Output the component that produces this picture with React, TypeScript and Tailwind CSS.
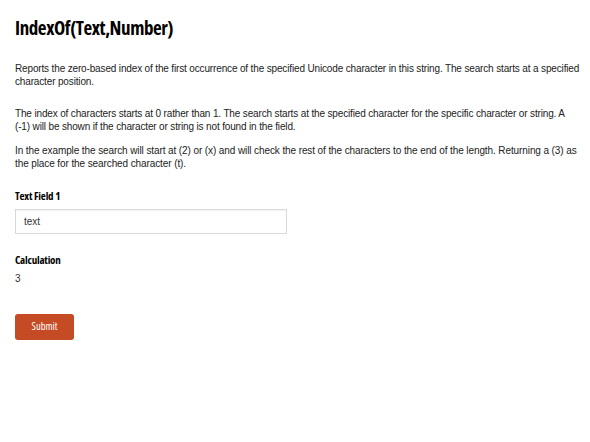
import { useState } from 'react'

const condensed = { fontFamily: '"Open Sans", "Liberation Sans", sans-serif', fontStretch: '75%' }

export default function App() {
  const [value, setValue] = useState('text')
  const [result] = useState('3')

  return (
    <div className="min-h-[442px] bg-white pl-[15px] pr-[8px] pt-[14px] text-[#222]" style={{ fontFamily: '"Liberation Sans", Arial, sans-serif' }}>
      <h1 className="text-[19px] font-bold leading-[28px] tracking-[-0.4px] text-black" style={condensed}>
        IndexOf(Text,Number)
      </h1>

      <p className="mt-[20px] text-[10px] leading-[13px] tracking-[-0.15px]">
        Reports the zero-based index of the first occurrence of the specified Unicode character in this string. The search starts at a specified
        <br />
        character position.
      </p>

      <p className="mt-[19px] text-[10px] leading-[13px] tracking-[-0.15px]">
        The index of characters starts at 0 rather than 1. The search starts at the specified character for the specific character or string. A
        <br />
        (-1) will be shown if the character or string is not found in the field.
      </p>

      <p className="mt-[11px] text-[10px] leading-[13px] tracking-[-0.1px]">
        In the example the search will start at (2) or (x) and will check the rest of the characters to the end of the length. Returning a (3) as
        <br />
        the place for the searched character (t).
      </p>

      {/* Form */}
      <div className="mt-[18px]">
        <label className="block text-[11px] font-bold leading-[16px] tracking-[-0.2px] text-black" style={condensed}>
          Text Field 1
        </label>
        <input
          value={value}
          onChange={(e) => setValue(e.target.value)}
          className="mt-[5px] block h-[25px] w-[272px] border border-[#d9d9d9] px-[8px] text-[10px] text-[#333] shadow-[inset_0_1px_1px_rgba(0,0,0,0.05)] outline-none"
        />
      </div>

      <div className="mt-[18px]">
        <label className="block text-[11px] font-bold leading-[16px] tracking-[-0.2px] text-black" style={condensed}>
          Calculation
        </label>
        <div className="mt-[4px] text-[10px] leading-[13px] text-[#333]">{result}</div>
      </div>

      <button
        className="mt-[29px] h-[26px] w-[59px] rounded-[3px] bg-[#c44b23] text-[10.5px] text-white"
        style={condensed}
      >
        Submit
      </button>
    </div>
  )
}
